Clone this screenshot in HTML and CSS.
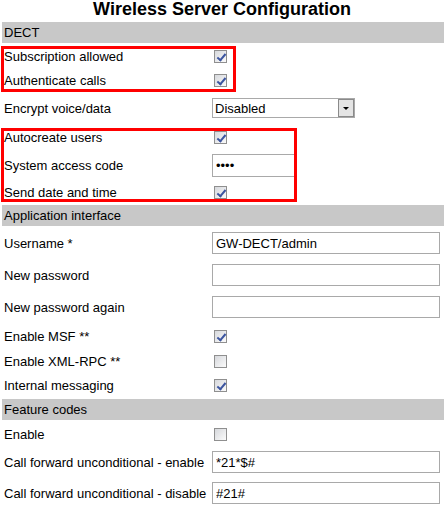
FILE: index.html
```html
<!DOCTYPE html>
<html lang="en">
<head>
<meta charset="UTF-8">
<title>Wireless Server Configuration</title>
<link rel="stylesheet" href="styles.css">
</head>
<body>
<div class="page">
<h1 class="title">Wireless Server Configuration</h1>

<div class="section">DECT</div>
<div class="group group-a">
<div class="row"><span class="label">Subscription allowed</span><input type="checkbox" class="check" checked></div>
<div class="row"><span class="label">Authenticate calls</span><input type="checkbox" class="check" checked></div>
<div class="frame"></div>
</div>
<div class="row row-32">
<span class="label">Encrypt voice/data</span>
<div class="select-wrap">
<select class="select"><option>Disabled</option><option>Enabled</option></select>
<span class="select-arrow"></span>
</div>
</div>
<div class="group group-b">
<div class="row row-26"><span class="label">Autocreate users</span><input type="checkbox" class="check" checked></div>
<div class="row row-30"><span class="label">System access code</span><input type="password" class="field field-short" value="1234"></div>
<div class="row"><span class="label">Send date and time</span><input type="checkbox" class="check" checked></div>
<div class="frame"></div>
</div>

<div class="section">Application interface</div>
<div class="row row-32"><span class="label">Username *</span><input type="text" class="field" value="GW-DECT/admin"></div>
<div class="row row-32"><span class="label">New password</span><input type="password" class="field"></div>
<div class="row row-32"><span class="label">New password again</span><input type="password" class="field"></div>
<div class="row row-26"><span class="label">Enable MSF **</span><input type="checkbox" class="check" checked></div>
<div class="row"><span class="label">Enable XML-RPC **</span><input type="checkbox" class="check"></div>
<div class="row row-25"><span class="label">Internal messaging</span><input type="checkbox" class="check" checked></div>

<div class="section">Feature codes</div>
<div class="row row-26"><span class="label">Enable</span><input type="checkbox" class="check"></div>
<div class="row row-30"><span class="label">Call forward unconditional - enable</span><input type="text" class="field" value="*21*$#"></div>
<div class="row row-32"><span class="label">Call forward unconditional - disable</span><input type="text" class="field" value="#21#"></div>
</div>
</body>
</html>
```

FILE: styles.css
```css
body {
    margin: 0;
    font-family: "Liberation Sans", Arial, sans-serif;
    font-size: 13px;
    color: #000;
    background: #fff;
}

.page {
    width: 444px;
}

.title {
    margin: 0 0 4px;
    height: 18px;
    font-size: 18px;
    line-height: 18px;
    font-weight: bold;
    text-align: center;
}

.section {
    margin: 1px 0 1px 2px;
    height: 21px;
    line-height: 21px;
    padding-left: 2px;
    background-color: #c8c8c8;
}

.page > .section:first-of-type {
    margin-top: 0;
}

.row {
    display: grid;
    grid-template-columns: 212px 1fr;
    align-items: center;
    height: 24px;
}

.row-25 { height: 25px; }
.row-26 { height: 26px; }
.row-28 { height: 28px; }
.row-30 { height: 30px; }
.row-32 { height: 32px; }

.label {
    padding-left: 4px;
    white-space: nowrap;
}

/* red annotation frames */
.group {
    position: relative;
}

.frame {
    position: absolute;
    left: 1px;
    border: 3px solid #ff0000;
    pointer-events: none;
}

.group-a .frame {
    top: 2px;
    bottom: 0;
    width: 229px;
}

.group-b .frame {
    top: 4px;
    bottom: 2px;
    width: 290px;
}

.check {
    -webkit-appearance: none;
    appearance: none;
    position: relative;
    width: 13px;
    height: 13px;
    margin: 0 0 0 2px;
    border: 1px solid #8f8f8f;
    background: linear-gradient(135deg, #d6d8dc, #fbfbfb);
    box-sizing: border-box;
}

.check:checked::after {
    content: "";
    position: absolute;
    left: 4px;
    top: 1px;
    width: 3px;
    height: 7px;
    border: solid #3c55a0;
    border-width: 0 2px 2px 0;
    transform: rotate(40deg);
}

.field {
    width: 228px;
    height: 22px;
    margin: 0;
    padding: 0 3px;
    border: 1px solid #a9a9a9;
    box-sizing: border-box;
    font-family: inherit;
    font-size: 13px;
    color: #000;
}

.field-short {
    width: 84px;
    height: 23px;
}

.select-wrap {
    position: relative;
    width: 143px;
    height: 20px;
}

.select {
    -webkit-appearance: none;
    appearance: none;
    width: 143px;
    height: 20px;
    margin: 0;
    padding: 0 2px;
    border: 1px solid #a9a9a9;
    border-radius: 0;
    background: #fff;
    font-family: inherit;
    font-size: 13px;
    color: #000;
}

.select-arrow {
    position: absolute;
    right: 1px;
    top: 1px;
    width: 16px;
    height: 18px;
    box-sizing: border-box;
    border: 1px solid #8a8a8a;
    background: #e4e4e4;
    pointer-events: none;
}

.select-arrow::after {
    content: "";
    position: absolute;
    left: 4px;
    top: 7px;
    border-left: 3px solid transparent;
    border-right: 3px solid transparent;
    border-top: 3px solid #000;
}
```
